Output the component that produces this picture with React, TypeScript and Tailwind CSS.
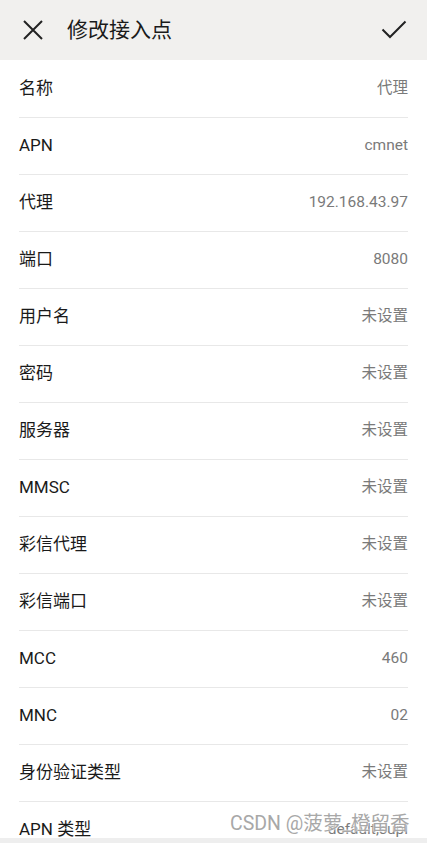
import React from 'react'

const rows: [string, string][] = [
  ['名称', '代理'],
  ['APN', 'cmnet'],
  ['代理', '192.168.43.97'],
  ['端口', '8080'],
  ['用户名', '未设置'],
  ['密码', '未设置'],
  ['服务器', '未设置'],
  ['MMSC', '未设置'],
  ['彩信代理', '未设置'],
  ['彩信端口', '未设置'],
  ['MCC', '460'],
  ['MNC', '02'],
  ['身份验证类型', '未设置'],
  ['APN 类型', 'default,supl'],
]

const font = { fontFamily: 'Roboto, "Noto Sans CJK SC", sans-serif' }

export default function App() {
  return (
    <div className="relative w-[427px] h-[843px] overflow-hidden bg-white flex flex-col" style={font}>
      <div className="h-[60px] shrink-0 bg-[#f1f0ee] flex items-center px-[22px]">
        <svg width="22" height="22" viewBox="0 0 22 22" className="shrink-0">
          <path d="M2 2 L20 20 M20 2 L2 20" stroke="#222" strokeWidth="2" fill="none" />
        </svg>
        <div className="ml-[23px] text-[21px] text-[#1a1a1a] leading-none">修改接入点</div>
        <div className="flex-1" />
        <svg width="26" height="20" viewBox="0 0 26 20" className="shrink-0 mr-[-2px]">
          <path d="M1.5 9.5 L9 17 L24.5 1.5" stroke="#222" strokeWidth="2" fill="none" />
        </svg>
      </div>

      <div className="flex-1 overflow-hidden px-[19px] pt-px">
        {rows.map(([label, value], i) => (
          <div
            key={i}
            className="h-[57px] flex items-center justify-between border-b border-[#e8e8e8]"
          >
            <span className="text-[17px] text-[#1a1a1a]">{label}</span>
            <span className="text-[15.5px] text-[#7a7a7a]">{value}</span>
          </div>
        ))}
      </div>

      <div className="h-[5px] shrink-0 bg-[#eeeeee]" />

      <div
        className="absolute left-[230px] top-[809px] text-[19.5px] text-[#a8a8a8] whitespace-nowrap"
        style={{ textShadow: '0 0 2px #fff, 0 0 2px #fff' }}
      >
        CSDN @菠萝_橙留香
      </div>
    </div>
  )
}
